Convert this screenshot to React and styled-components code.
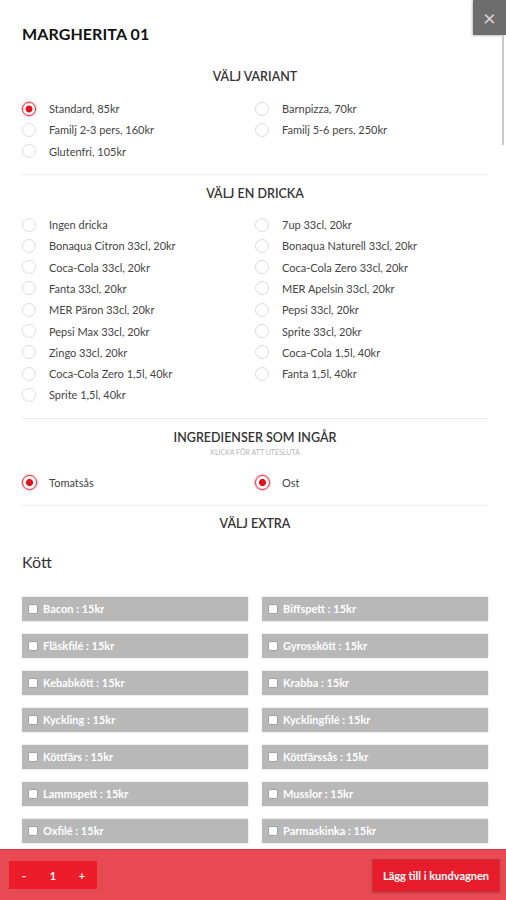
import React from 'react';
import styled, { createGlobalStyle } from 'styled-components';

const GlobalStyle = createGlobalStyle`
   html, body {
      margin: 0;
      padding: 0;
      background: #fff;
      font-family: Lato, "Open Sans", "Liberation Sans", sans-serif;
   }
`;

const variants = [
   { label: 'Standard, 85kr', checked: true },
   { label: 'Barnpizza, 70kr' },
   { label: 'Familj 2-3 pers, 160kr' },
   { label: 'Familj 5-6 pers, 250kr' },
   { label: 'Glutenfri, 105kr' },
];

const drinks = [
   'Ingen dricka', '7up 33cl, 20kr',
   'Bonaqua Citron 33cl, 20kr', 'Bonaqua Naturell 33cl, 20kr',
   'Coca-Cola 33cl, 20kr', 'Coca-Cola Zero 33cl, 20kr',
   'Fanta 33cl, 20kr', 'MER Apelsin 33cl, 20kr',
   'MER Päron 33cl, 20kr', 'Pepsi 33cl, 20kr',
   'Pepsi Max 33cl, 20kr', 'Sprite 33cl, 20kr',
   'Zingo 33cl, 20kr', 'Coca-Cola 1,5l, 40kr',
   'Coca-Cola Zero 1,5l, 40kr', 'Fanta 1,5l, 40kr',
   'Sprite 1,5l, 40kr',
];

const extras = [
   'Bacon', 'Biffspett', 'Fläskfilé', 'Gyrosskött', 'Kebabkött', 'Krabba',
   'Kyckling', 'Kycklingfilé', 'Köttfärs', 'Köttfärssås', 'Lammspett', 'Musslor',
   'Oxfilé', 'Parmaskinka',
];

const App = () => {
   return (
      <>
         <GlobalStyle />
         <StyledModal>
            <StyledClose>×</StyledClose>
            <StyledScroll />
            <StyledTitle>MARGHERITA 01</StyledTitle>

            <StyledSection $top="25px">
               <StyledHeading>Välj variant</StyledHeading>
               <StyledGrid $gap="13px">
                  {variants.map((v) => (
                     <StyledOption key={v.label}>
                        <StyledRadio $checked={v.checked} />
                        {v.label}
                     </StyledOption>
                  ))}
               </StyledGrid>
            </StyledSection>

            <StyledSection $top="11px">
               <StyledHeading>Välj en dricka</StyledHeading>
               <StyledGrid $gap="12px">
                  {drinks.map((d) => (
                     <StyledOption key={d}>
                        <StyledRadio />
                        {d}
                     </StyledOption>
                  ))}
               </StyledGrid>
            </StyledSection>

            <StyledSection $top="11px">
               <StyledHeading>Ingredienser som ingår</StyledHeading>
               <StyledSub>Klicka för att utesluta</StyledSub>
               <StyledGrid $gap="15px">
                  <StyledOption>
                     <StyledRadio $checked $big />
                     Tomatsås
                  </StyledOption>
                  <StyledOption>
                     <StyledRadio $checked $big />
                     Ost
                  </StyledOption>
               </StyledGrid>
            </StyledSection>

            <StyledLastSection>
               <StyledHeading>Välj extra</StyledHeading>
               <StyledGroup>Kött</StyledGroup>
               <StyledExtras>
                  {extras.map((e) => (
                     <StyledExtra key={e}>
                        <StyledCheck />
                        {e} : 15kr
                     </StyledExtra>
                  ))}
               </StyledExtras>
            </StyledLastSection>
         </StyledModal>

         <StyledFooter>
            <StyledQty>
               <StyledQtyItem>-</StyledQtyItem>
               <StyledQtyItem>1</StyledQtyItem>
               <StyledQtyItem>+</StyledQtyItem>
            </StyledQty>
            <StyledAdd>Lägg till i kundvagnen</StyledAdd>
         </StyledFooter>
      </>
   );
};

const StyledModal = styled.div`
   position: relative;
   padding: 24px 18px 80px 22px;
   color: #444;
`;

const StyledClose = styled.div`
   position: absolute;
   top: 0;
   right: 0;
   width: 33px;
   height: 35px;
   display: flex;
   align-items: center;
   justify-content: center;
   background: #6d6d6d;
   color: #d8d8d8;
   font-size: 22px;
   line-height: 1;
   box-shadow: -1px 1px 2px rgba(0, 0, 0, 0.25);
`;

const StyledScroll = styled.div`
   position: absolute;
   top: 35px;
   right: 2px;
   width: 2px;
   height: 110px;
   background: #c9c9c9;
`;

const StyledTitle = styled.h1`
   margin: 0;
   font-size: 16px;
   line-height: 20px;
   font-weight: 700;
   color: #111;
   letter-spacing: 0.1px;
`;

const StyledSection = styled.div`
   padding: ${({ $top }) => $top} 0 12px;
   border-bottom: 1px solid #ececec;
`;

const StyledLastSection = styled.div`
   padding-top: 10px;
`;

const StyledHeading = styled.h2`
   margin: 0;
   text-align: center;
   text-transform: uppercase;
   font-size: 12.5px;
   line-height: 16px;
   font-weight: 600;
   color: #333;
`;

const StyledSub = styled.div`
   text-align: center;
   text-transform: uppercase;
   font-size: 7px;
   line-height: 10px;
   color: #b5b5b5;
   margin-top: 1px;
`;

const StyledGrid = styled.div`
   display: grid;
   grid-template-columns: 1fr 1fr;
   margin-top: ${({ $gap }) => $gap};
`;

const StyledOption = styled.label`
   display: flex;
   align-items: center;
   height: 21.3px;
   font-size: 11px;
   color: #444;
`;

const StyledRadio = styled.span`
   box-sizing: border-box;
   flex: none;
   width: ${({ $big }) => ($big ? '15px' : '14px')};
   height: ${({ $big }) => ($big ? '15px' : '14px')};
   margin-right: ${({ $big }) => ($big ? '12px' : '13px')};
   border-radius: 50%;
   border: 1px solid ${({ $checked }) => ($checked ? '#e5232f' : '#dcdcdc')};
   background: ${({ $checked }) =>
      $checked ? 'radial-gradient(circle, #e5101e 0 3.2px, #fff 3.8px)' : '#fff'};
   box-shadow: ${({ $checked }) => ($checked ? '0 0 0 1px rgba(229,35,47,0.25)' : 'none')};
`;

const StyledGroup = styled.h3`
   margin: 20px 0 0;
   font-size: 16px;
   line-height: 20px;
   font-weight: 400;
   color: #333;
`;

const StyledExtras = styled.div`
   display: grid;
   grid-template-columns: 1fr 1fr;
   column-gap: 14px;
   row-gap: 13px;
   margin-top: 25px;
`;

const StyledExtra = styled.div`
   display: flex;
   align-items: center;
   height: 24px;
   padding: 0 6px;
   background: #b8b8b8;
   box-shadow: 0 0 1px rgba(0, 0, 0, 0.3);
   color: #fff;
   font-size: 11px;
   font-weight: 700;
`;

const StyledCheck = styled.span`
   flex: none;
   width: 8px;
   height: 8px;
   margin-right: 5px;
   border-radius: 2px;
   background: #fff;
   border: 1px solid #a0a0a0;
`;

const StyledFooter = styled.div`
   position: fixed;
   left: 0;
   right: 0;
   bottom: 0;
   height: 51px;
   display: flex;
   align-items: center;
   justify-content: space-between;
   padding: 0 6px 0 9px;
   box-sizing: border-box;
   background: #e84a53;
   border-top: 1px solid #d9363f;
`;

const StyledQty = styled.div`
   display: flex;
   align-items: center;
   justify-content: space-between;
   width: 88px;
   height: 28px;
   padding: 0 10px;
   box-sizing: border-box;
   background: #ec1c2b;
   color: #fff;
   font-size: 11px;
   font-weight: 700;
`;

const StyledQtyItem = styled.span`
   width: 10px;
   line-height: 1;
   text-align: center;
`;

const StyledAdd = styled.button`
   height: 33px;
   width: 128px;
   padding: 0;
   border: 1px solid #c8303a;
   background: #e81d2b;
   color: #fff;
   font-family: inherit;
   font-size: 11px;
   font-weight: 700;
   box-shadow: 0 1px 2px rgba(0, 0, 0, 0.2);
`;

export default App;
